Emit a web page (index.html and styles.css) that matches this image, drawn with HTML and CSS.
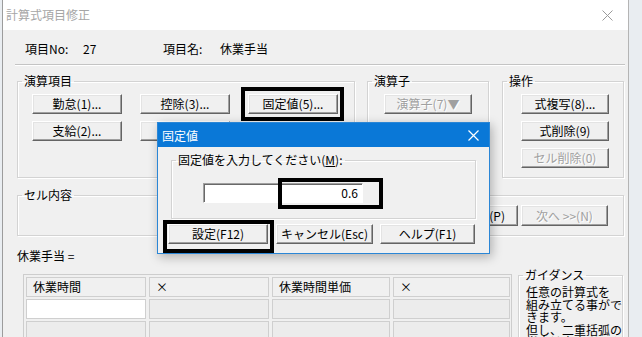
FILE: index.html
```html
<!DOCTYPE html>
<html lang="ja">
<head>
    <meta charset="UTF-8">
    <title>計算式項目修正</title>
    <link rel="stylesheet" href="styles.css">
</head>
<body>
    <div class="window">
        <div class="titlebar">
            <span class="title">計算式項目修正</span>
            <span class="close">
                <svg width="11" height="11" viewBox="0 0 11 11"><path d="M0.5 0.5 L10.5 10.5 M10.5 0.5 L0.5 10.5" stroke="#9a9a9a" stroke-width="1" fill="none"/></svg>
            </span>
        </div>

        <div class="info">
            <span class="info-label">項目No:</span>
            <span class="info-value">27</span>
            <span class="info-label2">項目名:</span>
            <span>休業手当</span>
        </div>
        <div class="sep"></div>

        <div class="groups">
            <fieldset class="group group-items">
                <legend>演算項目</legend>
                <div class="btn-grid">
                    <button class="btn">勤怠(1)...</button>
                    <button class="btn">控除(3)...</button>
                    <button class="btn">固定値(5)...</button>
                    <button class="btn">支給(2)...</button>
                    <button class="btn"></button>
                </div>
            </fieldset>
            <fieldset class="group group-op">
                <legend>演算子</legend>
                <div class="btn-col">
                    <button class="btn" disabled>演算子(7)▼</button>
                </div>
            </fieldset>
            <fieldset class="group group-ctl">
                <legend>操作</legend>
                <div class="btn-col">
                    <button class="btn">式複写(8)...</button>
                    <button class="btn">式削除(9)</button>
                    <button class="btn" disabled>セル削除(0)</button>
                </div>
            </fieldset>
        </div>

        <fieldset class="group group-cell">
            <legend>セル内容</legend>
            <div class="nav-btns">
                <button class="btn btn-prev">(P)</button>
                <button class="btn" disabled>次へ &gt;&gt;(N)</button>
            </div>
        </fieldset>

        <div class="formula">休業手当 =</div>

        <div class="bottom">
            <div class="sheet">
                <div class="cell head">休業時間</div>
                <div class="cell head">×</div>
                <div class="cell head">休業時間単価</div>
                <div class="cell head">×</div>
                <div class="cell active"></div>
                <div class="cell"></div>
                <div class="cell"></div>
                <div class="cell"></div>
                <div class="cell"></div>
                <div class="cell"></div>
                <div class="cell"></div>
                <div class="cell"></div>
            </div>
            <fieldset class="group group-guide">
                <legend>ガイダンス</legend>
                <div class="guide-text">任意の計算式を<br>組み立てる事がで<br>きます。<br>但し、二重括弧の<br>指定は出来ません。</div>
            </fieldset>
        </div>
    </div>

    <!-- 固定値 dialog -->
    <div class="dialog">
        <div class="dialog-title">
            <span>固定値</span>
            <svg width="11" height="11" viewBox="0 0 11 11"><path d="M0.5 0.5 L10.5 10.5 M10.5 0.5 L0.5 10.5" stroke="#fff" stroke-width="1.2" fill="none"/></svg>
        </div>
        <fieldset class="group group-value">
            <legend>固定値を入力してください(<u>M</u>):</legend>
            <div class="value-input">0.6</div>
        </fieldset>
        <div class="dialog-btns">
            <button class="btn btn-set">設定(F12)</button>
            <button class="btn btn-cancel">キャンセル(Esc)</button>
            <button class="btn btn-help">ヘルプ(F1)</button>
        </div>
    </div>

    <!-- annotation frames -->
    <div class="mark mark-fixed"></div>
    <div class="mark mark-input"></div>
    <div class="mark mark-set"></div>
</body>
</html>
```

FILE: styles.css
```css
body {
    margin: 0;
    width: 642px;
    height: 337px;
    overflow: hidden;
    position: relative;
    background: #e9edf1;
    font-family: "Noto Sans CJK JP", "Noto Sans", sans-serif;
    font-size: 12px;
    color: #000;
}

.window {
    margin-left: 2px;
    width: 627px;
    height: 337px;
    box-sizing: border-box;
    border-left: 1px solid #9c9c9c;
    border-right: 1px solid #b4b4b4;
    background: #f0f0f0;
    overflow: hidden;
}

.titlebar {
    height: 30px;
    background: #fff;
    display: flex;
    align-items: center;
    justify-content: space-between;
    padding-left: 3px;
}

.title {
    color: #a6a6a6;
    line-height: 16px;
}

.close {
    width: 42px;
    display: flex;
    justify-content: center;
}

.info {
    display: flex;
    margin-top: 11px;
    padding-left: 22px;
    line-height: 16px;
}

.info-label { width: 58px; }
.info-value { width: 80px; }
.info-label2 { width: 57px; }

.sep {
    margin: 7px 0 0 12px;
    width: 610px;
    border-top: 1px solid #c4c4c4;
    border-bottom: 1px solid #fff;
}

/* group boxes */
.group {
    margin: 0;
    padding: 0;
    min-width: 0;
    box-sizing: border-box;
    border: 1px solid #d3d3d3;
    box-shadow: inset 1px 1px #fff, 1px 1px #fff;
}

.group legend {
    margin-left: 4px;
    padding: 0 2px;
    line-height: 16px;
}

.groups {
    display: flex;
    margin: 7px 0 0 14px;
}

.group-items {
    width: 338px;
    height: 105px;
}

.group-op {
    width: 122px;
    height: 105px;
    margin-left: 12px;
}

.group-ctl {
    width: 122px;
    height: 105px;
    margin-left: 13px;
}

.btn-grid {
    display: grid;
    grid-template-columns: repeat(3, 90px);
    grid-auto-rows: 20px;
    column-gap: 18px;
    row-gap: 7px;
    padding: 5px 0 0 14px;
}

.btn-col {
    display: flex;
    flex-direction: column;
    gap: 7px;
    padding-top: 5px;
}

.group-op .btn-col { padding-left: 16px; }
.group-ctl .btn-col { padding-left: 18px; }

.btn-col .btn {
    width: 88px;
    height: 20px;
}

.btn {
    font: inherit;
    font-size: 12px;
    color: #000;
    padding: 0;
    margin: 0;
    line-height: 16px;
    background: #f0f0f0;
    border: 1px solid;
    border-color: #fff #646464 #646464 #fff;
    box-shadow: inset -1px -1px #a0a0a0, inset 1px 1px #e3e3e3;
    white-space: nowrap;
}

.btn:disabled {
    color: #a0a0a0;
    text-shadow: 1px 1px #fff;
}

.group-cell {
    margin: 9px 0 0 14px;
    width: 607px;
    height: 49px;
}

.nav-btns {
    display: flex;
    justify-content: flex-end;
    gap: 3px;
    padding: 2px 15px 0 0;
}

.nav-btns .btn {
    width: 87px;
    height: 21px;
}

.btn-prev {
    text-align: right;
    padding-right: 12px;
}

.formula {
    margin: 12px 0 0 14px;
    line-height: 16px;
}

.bottom {
    display: flex;
    align-items: flex-start;
    margin-top: 3px;
}

.sheet {
    margin: 7px 0 0 20px;
    width: 489px;
    box-sizing: border-box;
    border: 1px solid #cdcdcd;
    padding: 2px;
    display: grid;
    grid-template-columns: 120px 120px 118px 117px;
    grid-auto-rows: 20px;
    column-gap: 3px;
    row-gap: 2px;
}

.cell {
    border: 1px solid #cfcfcf;
    background: #ececec;
    padding-left: 6px;
    line-height: 18px;
}

.cell.head {
    background: #f0f0f0;
}

.cell.active {
    background: #fff;
}

.group-guide {
    margin-left: 6px;
    width: 105px;
    height: 90px;
}

.guide-text {
    padding: 3px 0 0 7px;
    line-height: 12.5px;
    white-space: nowrap;
}

/* dialog */
.dialog {
    position: absolute;
    left: 157px;
    top: 122px;
    width: 333px;
    height: 132px;
    box-sizing: border-box;
    border: 1px solid #2a86d6;
    background: #f0f0f0;
    box-shadow: 2px 3px 10px rgba(0, 0, 0, 0.28);
}

.dialog-title {
    height: 24px;
    background: #0a78d7;
    color: #fff;
    display: flex;
    align-items: center;
    justify-content: space-between;
    padding: 0 10px 0 4px;
}

.group-value {
    margin: 5px 0 0 13px;
    width: 305px;
    height: 67px;
}

.value-input {
    margin: 15px 0 0 31px;
    width: 160px;
    height: 20px;
    box-sizing: border-box;
    background: #fff;
    border: 1px solid;
    border-color: #a0a0a0 #fff #fff #a0a0a0;
    box-shadow: inset 1px 1px #696969;
    text-align: right;
    padding-right: 4px;
    line-height: 17px;
}

.dialog-btns {
    display: flex;
    margin: 5px 0 0 10px;
}

.dialog-btns .btn {
    height: 20px;
}

.btn-set { width: 100px; }
.btn-cancel { width: 97px; margin-left: 8px; }
.btn-help { width: 95px; margin-left: 7px; }

/* black annotation frames */
.mark {
    position: absolute;
    border: 4px solid #000;
    box-sizing: border-box;
}

.mark-fixed {
    left: 241px;
    top: 87px;
    width: 103px;
    height: 34px;
}

.mark-input {
    left: 278px;
    top: 178px;
    width: 105px;
    height: 31px;
}

.mark-set {
    left: 163px;
    top: 220px;
    width: 111px;
    height: 33px;
}
```
